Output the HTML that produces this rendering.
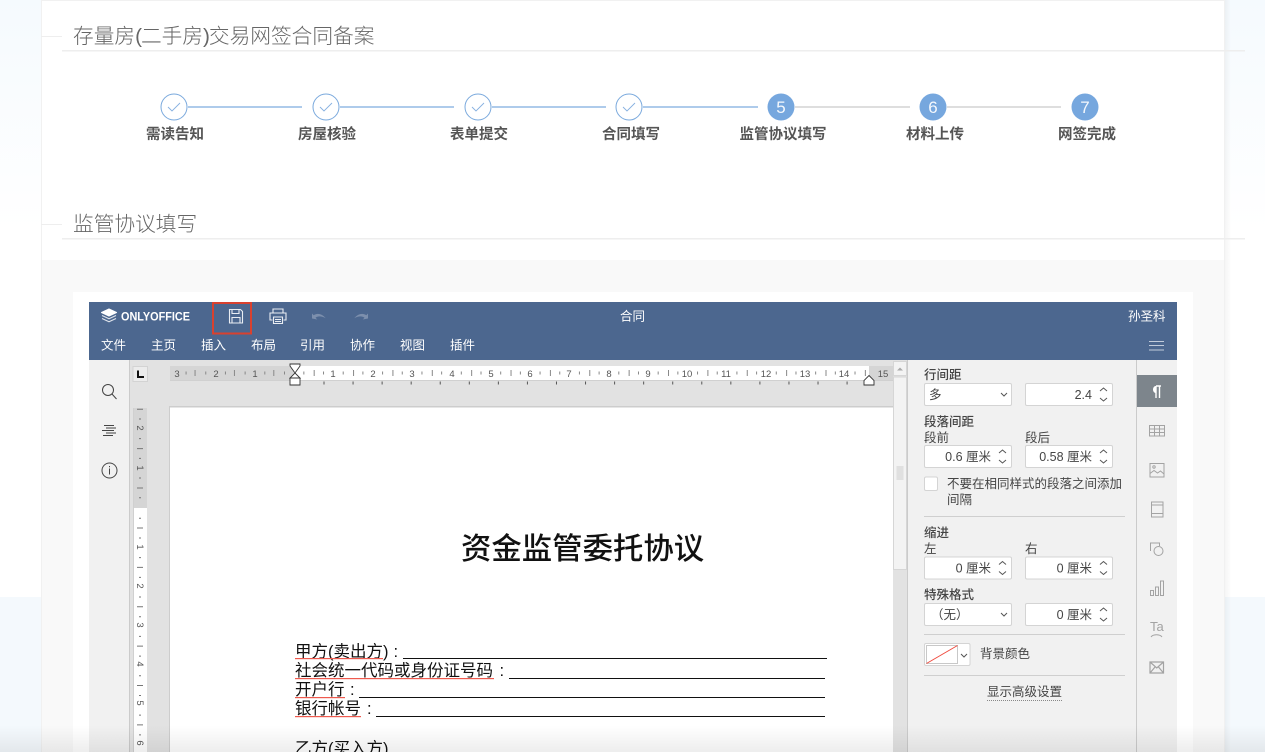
<!DOCTYPE html>
<html lang="zh"><head><meta charset="utf-8"><title>监管协议填写</title>
<style>
html,body{margin:0;padding:0;width:1265px;height:752px;overflow:hidden;background:#fff}
svg{position:absolute;left:0;top:0;display:block}
text{font-family:"Liberation Sans","Noto Sans CJK SC",sans-serif}
.p{font-size:12.5px;fill:#444}
.n{font-size:12.5px;fill:#444;text-anchor:end}
.m{font-size:12.5px;fill:#fff}
.s{font-size:14.5px;fill:#555;font-weight:700;text-anchor:middle}
.h{font-size:20.7px;fill:#666;font-weight:300}
.d{font-size:16.5px;fill:#111}
.r{font-size:9.5px;fill:#555;text-anchor:middle}
.i{fill:none;stroke:#a3a3a3;stroke-width:1}
.k{fill:none;stroke:#444;stroke-width:1}
.a{fill:none;stroke:#555;stroke-width:1}
.b{fill:#fff;stroke:#d4d4d4;stroke-width:1}
</style></head><body>
<svg width="1265" height="752" viewBox="0 0 1265 752" xmlns="http://www.w3.org/2000/svg">
<defs>
<linearGradient id="tl" x1="0" y1="0" x2="0" y2="1"><stop offset="0" stop-color="#f5fafe"/><stop offset="1" stop-color="#fff"/></linearGradient>
<linearGradient id="bt" x1="0" y1="0" x2="0" y2="1"><stop offset="0" stop-color="#000" stop-opacity="0"/><stop offset="1" stop-color="#000" stop-opacity=".07"/></linearGradient>
<linearGradient id="sr" x1="0" y1="0" x2="1" y2="0"><stop offset="0" stop-color="#000" stop-opacity=".04"/><stop offset="1" stop-color="#000" stop-opacity="0"/></linearGradient>
</defs>
<!-- page backdrop -->
<rect x="0" y="0" width="41" height="230" fill="url(#tl)"/>
<rect x="1225" y="0" width="40" height="230" fill="url(#tl)"/>
<rect x="0" y="597" width="1265" height="155" fill="#f4f9fd"/>
<rect x="1225" y="0" width="6" height="752" fill="url(#sr)"/>
<!-- card -->
<rect x="41" y="0" width="1184" height="752" fill="#f1f1f1"/>
<rect x="42" y="1" width="1182" height="751" fill="#fff"/>
<rect x="42" y="260" width="1182" height="492" fill="#f9f9f9"/>
<rect x="73" y="292" width="1120" height="460" fill="#fff"/>
<!-- headings -->
<rect x="41" y="36" width="21" height="1" fill="#eee"/>
<rect x="62" y="50" width="1183" height="1.5" fill="#eee"/>
<text class="h" x="73" y="43">存量房(<tspan dx="-1">二手房</tspan>)<tspan dx="-1">交易网签合同备案</tspan></text>
<rect x="41" y="224" width="21" height="1" fill="#eee"/>
<rect x="62" y="238" width="1183" height="1.5" fill="#eee"/>
<text class="h" x="73" y="231">监管协议填写</text>
<!-- steps -->
<g fill="#aecbeb">
<rect x="188" y="106" width="114" height="2"/><rect x="340" y="106" width="114" height="2"/><rect x="492" y="106" width="114" height="2"/><rect x="643" y="106" width="115" height="2"/>
</g>
<g fill="#dedede"><rect x="795" y="106" width="115" height="2"/><rect x="947" y="106" width="114" height="2"/></g>
<g fill="#fff" stroke="#7aa9dd" stroke-width="1">
<circle cx="174" cy="107" r="13"/><circle cx="326" cy="107" r="13"/><circle cx="478" cy="107" r="13"/><circle cx="629" cy="107" r="13"/>
</g>
<g fill="none" stroke="#86b0e0" stroke-width=".9">
<path d="M168 107l4 4 8-8"/><path d="M320 107l4 4 8-8"/><path d="M472 107l4 4 8-8"/><path d="M623 107l4 4 8-8"/>
</g>
<g fill="#76a7de"><circle cx="781" cy="107" r="13.5"/><circle cx="933" cy="107" r="13.5"/><circle cx="1085" cy="107" r="13.5"/></g>
<g fill="#f4f8fd" font-size="17" text-anchor="middle"><text x="781" y="113">5</text><text x="933" y="113">6</text><text x="1085" y="113">7</text></g>
<text class="s" x="175" y="139">需读告知</text><text class="s" x="327" y="139">房屋核验</text><text class="s" x="479" y="139">表单提交</text><text class="s" x="631" y="139">合同填写</text><text class="s" x="783" y="139">监管协议填写</text><text class="s" x="935" y="139">材料上传</text><text class="s" x="1087" y="139">网签完成</text>
<!-- editor body -->
<rect x="89" y="302" width="1088" height="450" fill="#f1f1f1"/>
<rect x="89" y="302" width="1088" height="58" fill="#4c678f"/>
<rect x="129" y="360" width="779" height="392" fill="#e2e2e2"/>
<rect x="129" y="360" width="1" height="392" fill="#cbcbcb"/>
<rect x="169" y="407" width="724" height="345" fill="#fff"/>
<rect x="169" y="406" width="724" height="1.500" fill="#cdcdcd"/>
<rect x="169" y="407" width="1" height="345" fill="#cdcdcd"/>
<!-- header -->
<g fill="none" stroke="#fff" stroke-width="1.100" stroke-linejoin="round">
<path d="M109 309l7.500 3.500-7.500 3.500-7.500-3.500z" fill="#fff"/>
<path d="M102 315.500l7 3.300 7-3.300M102 318.500l7 3.300 7-3.300" stroke="#dfe4ec"/>
</g>
<text x="121" y="320.500" font-size="11.500" font-weight="700" fill="#fff" textLength="69" lengthAdjust="spacingAndGlyphs">ONLYOFFICE</text>
<rect x="213" y="303" width="38" height="30.500" fill="none" stroke="#d9412f" stroke-width="2"/>
<path d="M229.500 309.500h11l2 2v11.500h-13z" fill="none" stroke="#e9edf3" stroke-width="1.100"/>
<path d="M232 309.500v4h7v-4M232 323v-5.500h8v5.500" fill="none" stroke="#e9edf3" stroke-width="1.100"/>
<path d="M273 313v-4h10v4M272.500 320h-2.500v-7h16v7h-2.500M273.500 317h9v6.500h-9zM275 319.500h6M275 321.500h6" fill="none" stroke="#e9edf3" stroke-width="1.100"/>
<path d="M312 318.500v-5l1.700 1.700c3.500-2.300 8-1.800 12 3-3.800-2.200-7.800-2.500-10.200-.4l1.800 1.700z" fill="#7c8fad"/>
<path d="M368 318.500v-5l-1.700 1.700c-3.500-2.300-8-1.800-12 3 3.800-2.200 7.800-2.500 10.200-.4l-1.800 1.700z" fill="#7c8fad"/>
<text class="m" x="620" y="320.500">合同</text>
<text class="m" x="1128" y="320.500">孙圣科</text>
<text class="m" x="101" y="349.500">文件</text><text class="m" x="151" y="349.500">主页</text><text class="m" x="201" y="349.500">插入</text><text class="m" x="251" y="349.500">布局</text><text class="m" x="300" y="349.500">引用</text><text class="m" x="350" y="349.500">协作</text><text class="m" x="400" y="349.500">视图</text><text class="m" x="450" y="349.500">插件</text>
<path d="M1149 341.500h15M1149 345.500h15M1149 350h15" stroke="#c2ccdb" stroke-width="1"/>
<!-- left rail -->
<circle cx="108" cy="390" r="5.500" class="k"/><path d="M112 394l4.500 5" class="k"/>
<path d="M104 425.500h10M106 428h10M102 430.500h12M106 433h10M103 435.500h10" class="k" stroke-width=".9"/>
<circle cx="109.500" cy="470.500" r="7.500" class="k"/><path d="M109.500 468.500v6M109.500 466v1.300" class="k"/>
<!-- horizontal ruler -->
<rect x="133" y="366.500" width="14.500" height="15" fill="#ececec" stroke="#d3d3d3"/>
<path d="M138 370.500v6.500h6" fill="none" stroke="#111" stroke-width="2"/>
<rect x="170" y="366" width="723" height="14" fill="#d5d5d5"/>
<rect x="294" y="366" width="575" height="14" fill="#fff"/>
<rect x="170" y="380" width="723" height="1" fill="#d0d0d0"/>
<g stroke="#888" fill="none">
<path d="M294 373h575" stroke-width="3" stroke-dasharray="1 18.685" stroke-dashoffset="-9.340"/>
<path d="M313.685 373h555" stroke-width="6" stroke-dasharray="1 38.370"/>
<path d="M285 373h-115" stroke-width="3" stroke-dasharray="1 18.685"/>
<path d="M274.300 373h-100" stroke-width="6" stroke-dasharray="1 38.370"/>
<path d="M323.500 383h525" stroke-width="3" stroke="#555" stroke-dasharray="1 28.060"/>
</g>
<g>
<rect x="171" y="368" width="12" height="10" fill="#d5d5d5"/><rect x="210" y="368" width="12" height="10" fill="#d5d5d5"/><rect x="249" y="368" width="12" height="10" fill="#d5d5d5"/>
<text class="r" x="177" y="377">3</text><text class="r" x="216" y="377">2</text><text class="r" x="255" y="377">1</text>
<g fill="#fff"><rect x="328" y="368" width="10" height="10"/><rect x="368" y="368" width="10" height="10"/><rect x="407" y="368" width="10" height="10"/><rect x="447" y="368" width="10" height="10"/><rect x="486" y="368" width="10" height="10"/><rect x="525" y="368" width="10" height="10"/><rect x="564" y="368" width="10" height="10"/><rect x="604" y="368" width="10" height="10"/><rect x="643" y="368" width="10" height="10"/><rect x="680" y="368" width="14" height="10"/><rect x="719" y="368" width="14" height="10"/><rect x="759" y="368" width="14" height="10"/><rect x="798" y="368" width="14" height="10"/><rect x="837" y="368" width="14" height="10"/></g>
<text class="r" x="333" y="377">1</text><text class="r" x="373" y="377">2</text><text class="r" x="412" y="377">3</text><text class="r" x="452" y="377">4</text><text class="r" x="491" y="377">5</text><text class="r" x="530" y="377">6</text><text class="r" x="569" y="377">7</text><text class="r" x="609" y="377">8</text><text class="r" x="648" y="377">9</text><text class="r" x="687" y="377">10</text><text class="r" x="726" y="377">11</text><text class="r" x="766" y="377">12</text><text class="r" x="805" y="377">13</text><text class="r" x="844" y="377">14</text><text class="r" x="883" y="377">15</text>
</g>
<path d="M290 364h10v2l-5 7-5-7zM295 373l5 5h-10zM290 378h10v7h-10z" fill="#fff" stroke="#333" stroke-width=".9"/>
<path d="M869 375.500l5 5v4.500h-10v-4.500z" fill="#fff" stroke="#333" stroke-width=".9"/>
<!-- vertical ruler -->
<rect x="134" y="408" width="13" height="100" fill="#d5d5d5"/>
<rect x="134" y="508" width="13" height="244" fill="#fff"/>
<rect x="133" y="408" width="1" height="344" fill="#d0d0d0"/>
<g stroke="#777" fill="none">
<path d="M140 517.800v234" stroke-width="2" stroke-dasharray="1 18.685"/>
<path d="M140 527.500v225" stroke-width="6" stroke-dasharray="1 38.370"/>
<path d="M140 498.200v-90" stroke-width="2" stroke-dasharray="1 18.685"/>
<path d="M140 488.500v-81" stroke-width="6" stroke-dasharray="1 38.370"/>
</g>
<g font-size="9.500" fill="#555" text-anchor="middle">
<rect x="135" y="463" width="11" height="10" fill="#d5d5d5"/><rect x="135" y="423" width="11" height="10" fill="#d5d5d5"/>
<g fill="#fff"><rect x="135" y="542" width="11" height="10"/><rect x="135" y="581" width="11" height="10"/><rect x="135" y="620" width="11" height="10"/><rect x="135" y="659" width="11" height="10"/><rect x="135" y="698" width="11" height="10"/><rect x="135" y="738" width="11" height="10"/></g>
<text transform="translate(137,428) rotate(90)">2</text><text transform="translate(137,468) rotate(90)">1</text><text transform="translate(137,547) rotate(90)">1</text><text transform="translate(137,586) rotate(90)">2</text><text transform="translate(137,625) rotate(90)">3</text><text transform="translate(137,664) rotate(90)">4</text><text transform="translate(137,703) rotate(90)">5</text><text transform="translate(137,743) rotate(90)">6</text>
</g>
<!-- document -->
<text x="461" y="559" font-size="30.400" fill="#111" font-weight="500">资金监管委托协议</text>
<text class="d" x="295" y="657">甲方(卖出方)</text><text class="d" x="393.500" y="657">:</text>
<text class="d" x="295" y="676">社会统一代码或身份证号码</text><text class="d" x="499.500" y="676">:</text>
<text class="d" x="295" y="695">开户行</text><text class="d" x="350" y="695">:</text>
<text class="d" x="295" y="714">银行帐号</text><text class="d" x="367" y="714">:</text>
<text class="d" x="295" y="754">乙方(买入方)</text>
<g fill="#111"><rect x="403" y="658" width="424" height="1"/><rect x="509" y="678" width="316" height="1"/><rect x="359" y="697" width="466" height="1"/><rect x="376" y="716" width="449" height="1"/></g>
<g fill="#ef5a4e"><rect x="295" y="658" width="88" height="1.200"/><rect x="295" y="678" width="199" height="1.200"/><rect x="295" y="697" width="50" height="1.200"/><rect x="295" y="716" width="66" height="1.200"/></g>
<!-- scrollbar -->
<rect x="893" y="361" width="14" height="391" fill="#e2e2e2"/>
<rect x="893.500" y="361.500" width="13" height="14" fill="#f3f3f3" stroke="#d6d6d6"/>
<path d="M897 370.500l3-3 3 3z" fill="#aaa"/>
<rect x="893.500" y="377" width="13" height="192.500" fill="#f3f3f3" stroke="#d6d6d6"/>
<path d="M896.500 467h7M896.500 469h7M896.500 471h7M896.500 473h7M896.500 475h7M896.500 477h7M896.500 479h7" stroke="#ccc" stroke-width="1"/>
<rect x="907" y="360" width="1" height="392" fill="#cbcbcb"/>
<rect x="1136" y="360" width="1" height="392" fill="#cbcbcb"/>
<!-- right panel -->
<text class="p" x="924" y="379" font-weight="500">行间距</text>
<rect class="b" x="924.500" y="383.500" width="87" height="22" rx="1.500"/><text class="p" x="929" y="399">多</text><path class="a" d="M1001 393l3 3 3-3"/>
<rect class="b" x="1025.500" y="383.500" width="87" height="22" rx="1.500"/><text class="n" x="1092" y="399">2.4</text><path class="a" d="M1100 391l3.500-3 3.500 3M1100 398l3.500 3 3.500-3"/>
<text class="p" x="924" y="426" font-weight="500">段落间距</text>
<text class="p" x="924" y="442">段前</text><text class="p" x="1025" y="442">段后</text>
<rect class="b" x="924.500" y="445.500" width="87" height="22" rx="1.500"/><text class="n" x="991" y="461">0.6 厘米</text><path class="a" d="M999 453l3.500-3 3.500 3M999 460l3.500 3 3.500-3"/>
<rect class="b" x="1025.500" y="445.500" width="87" height="22" rx="1.500"/><text class="n" x="1092" y="461">0.58 厘米</text><path class="a" d="M1100 453l3.500-3 3.500 3M1100 460l3.500 3 3.500-3"/>
<rect class="b" x="924.500" y="477" width="13" height="13.500" rx="1.500"/>
<text class="p" x="947" y="488">不要在相同样式的段落之间添加</text><text class="p" x="947" y="504">间隔</text>
<rect x="924" y="516" width="201" height="1" fill="#cfcfcf"/>
<text class="p" x="924" y="537" font-weight="500">缩进</text>
<text class="p" x="924" y="553">左</text><text class="p" x="1025" y="553">右</text>
<rect class="b" x="924.500" y="557" width="87" height="22" rx="1.500"/><text class="n" x="991" y="572.500">0 厘米</text><path class="a" d="M999 564.500l3.500-3 3.500 3M999 571.500l3.500 3 3.500-3"/>
<rect class="b" x="1025.500" y="557" width="87" height="22" rx="1.500"/><text class="n" x="1092" y="572.500">0 厘米</text><path class="a" d="M1100 564.500l3.500-3 3.500 3M1100 571.500l3.500 3 3.500-3"/>
<text class="p" x="924" y="599" font-weight="500">特殊格式</text>
<rect class="b" x="924.500" y="603.500" width="87" height="22" rx="1.500"/><text class="p" x="931" y="619">（无）</text><path class="a" d="M1001 613l3 3 3-3"/>
<rect class="b" x="1025.500" y="603.500" width="87" height="22" rx="1.500"/><text class="n" x="1092" y="619">0 厘米</text><path class="a" d="M1100 611l3.500-3 3.500 3M1100 618l3.500 3 3.500-3"/>
<rect x="924" y="634" width="201" height="1" fill="#cfcfcf"/>
<rect class="b" x="924.500" y="643.500" width="45.500" height="22" rx="1.500"/>
<rect x="926.500" y="645.500" width="31" height="18" fill="#fff" stroke="#bbb" stroke-width=".8"/>
<path d="M926.500 663.500l31-18" stroke="#f04a3e" stroke-width="1"/>
<path class="a" d="M961 654l3 3 3-3"/>
<text class="p" x="980" y="658">背景颜色</text>
<rect x="924" y="675" width="201" height="1" fill="#cfcfcf"/>
<text class="p" x="1024.500" y="696" text-anchor="middle">显示高级设置</text>
<path d="M987 700.500h75" stroke="#888" stroke-width="1" stroke-dasharray="1 1"/>
<!-- right tabs -->
<rect x="1137" y="375" width="40" height="32" fill="#7d858c"/>
<path d="M1156 386h5M1156 386v12M1159.500 386v12" stroke="#fff" stroke-width="1.400" fill="none"/><path d="M1156 386c-4 0-4 7 0 7z" fill="#fff"/>
<g class="i">
<path d="M1149.500 425.500h15v10.500h-15zM1149.500 429h15M1149.500 432.500h15M1154.500 425.500v10.500M1159.500 425.500v10.500"/>
<path d="M1150 463.500h14v13.500h-14zM1150 473.500l4-3 3.500 2.500 3-2 3.500 3"/><circle cx="1154" cy="467" r="1.200"/>
<path d="M1151.500 502h11.500v15h-11.500zM1151.500 505h11.500M1151.500 513.500h11.500"/>
<path d="M1150.500 551v-8h9v3"/><circle cx="1158.500" cy="551" r="4.500"/>
<path d="M1150.500 590.500h3v5h-3zM1155.500 587h3v8.500h-3zM1160.500 581h3v14.500h-3z"/>
<path d="M1151 637c2-3 9-3 11 0"/>
<path d="M1150 662h13.500v11h-13.500zM1150 662l6.750 6 6.750-6M1150 673l5-6M1163.500 673l-5-6" stroke-width="1.200"/>
</g>
<text x="1150" y="631" font-size="13" fill="#a3a3a3">Ta</text>
<!-- bottom fade -->
<rect x="0" y="725" width="1265" height="27" fill="url(#bt)"/>
</svg>
</body></html>
